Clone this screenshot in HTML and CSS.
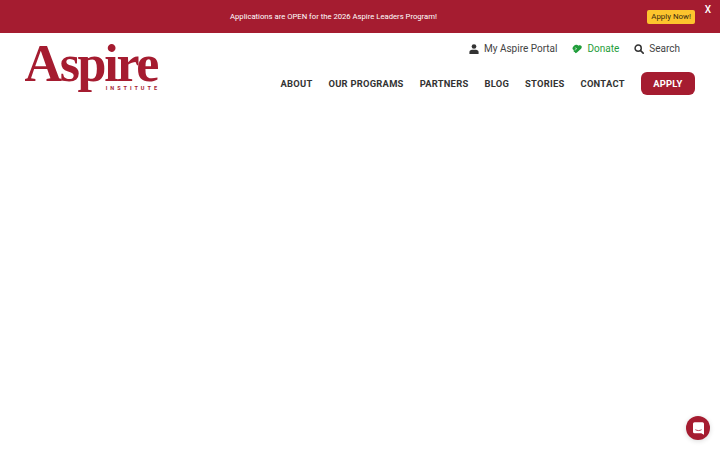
FILE: index.html
```html
<!DOCTYPE html>
<html lang="en">
<head>
    <meta charset="UTF-8">
    <meta name="viewport" content="width=device-width, initial-scale=1.0">
    <title>Aspire Institute</title>
    <link rel="stylesheet" href="styles.css">
</head>
<body>
    <div class="top-banner">
        <p class="banner-text">Applications are OPEN for the 2026 Aspire Leaders Program!</p>
        <a class="banner-button" href="#">Apply Now!</a>
        <span class="banner-close">X</span>
    </div>

    <header class="site-header">
        <a class="logo" href="#">
            <span class="logo-name">Aspire</span>
            <span class="logo-sub">INSTITUTE</span>
        </a>
        <div class="header-right">
            <div class="utility-nav">
                <a class="utility-link" href="#">
                    <svg class="utility-icon" viewBox="0 0 12 12"><circle cx="6" cy="3" r="2.8" fill="#333"/><path d="M.5 12V9.600C.5 7.900 2 6.800 3.600 6.800h4.800c1.600 0 3.100 1.100 3.100 2.800V12z" fill="#333"/></svg>
                    My Aspire Portal
                </a>
                <a class="utility-link donate" href="#">
                    <svg class="utility-icon" viewBox="0 0 12 12"><path d="M4 1.200C5.500.6 7 1.200 7.700 2 8.800 1.300 10.800 1.400 11.500 2.600c.6 1.200-.2 2.800-1.300 3.800L6.300 10c-.7.700-1.500 1.200-2.200.9-.5-.3-.4-1-.9-1.200-.6-.1-1.200-.3-1.300-.9-.1-.6.4-1 .1-1.500C1.600 6.800.6 6.300.6 5.400c0-1.700 1.700-3.500 3.400-4.200z" fill="#1f9d3a"/><path d="M3.500 4.500l2.500 1.200M3.200 7.200l2-.6" stroke="#fff" stroke-width=".7" fill="none"/></svg>
                    Donate
                </a>
                <a class="utility-link" href="#">
                    <svg class="utility-icon" viewBox="0 0 12 12"><circle cx="5" cy="5" r="3.700" fill="none" stroke="#333" stroke-width="1.800"/><path d="M7.800 7.800L11 11" stroke="#333" stroke-width="2" stroke-linecap="round"/></svg>
                    Search
                </a>
            </div>
            <nav class="main-nav">
                <a href="#">ABOUT</a>
                <a href="#">OUR PROGRAMS</a>
                <a href="#">PARTNERS</a>
                <a href="#">BLOG</a>
                <a href="#">STORIES</a>
                <a href="#">CONTACT</a>
                <a class="apply-button" href="#">APPLY</a>
            </nav>
        </div>
    </header>

    <button class="chat-button" aria-label="Open chat">
        <svg viewBox="0 0 14 16" class="chat-icon"><path d="M2 0h10a2 2 0 0 1 2 2v14l-3.500-2H2a2 2 0 0 1-2-2V2a2 2 0 0 1 2-2z" fill="#fff"/><path d="M3 9.500c2.500 1.500 5.500 1.500 8 0" fill="none" stroke="#a51c30" stroke-width="1"/></svg>
    </button>
</body>
</html>
```

FILE: styles.css
```css
:root {
    --brand-color: #a51c30;
    --text-color: #333;
}
html, body {
    height: 100%;
}
body {
    font-family: Roboto, 'Open Sans', sans-serif;
    margin: 0;
    background-color: white;
    color: var(--text-color);
    overflow: hidden;
}
a {
    color: inherit;
    text-decoration: none;
}
.top-banner {
    position: relative;
    display: flex;
    align-items: center;
    justify-content: center;
    height: 33px;
    padding-right: 53px;
    background-color: var(--brand-color);
    color: white;
}
.banner-text {
    margin: 0;
    font-size: 7.700px;
}
.banner-button {
    position: absolute;
    top: 10px;
    right: 25px;
    padding: 0 4px;
    height: 14px;
    line-height: 14px;
    background-color: #fdc42d;
    border-radius: 2px;
    color: #3a2a10;
    font-size: 7.900px;
}
.banner-close {
    position: absolute;
    top: 4px;
    right: 9px;
    font-size: 10px;
    font-weight: 500;
}
.site-header {
    display: flex;
    justify-content: space-between;
    padding: 0 25px;
}
.logo {
    display: flex;
    flex-direction: column;
    align-items: flex-end;
    width: 133px;
    margin-top: 4px;
    margin-left: -1px;
    color: var(--brand-color);
}
.logo-name {
    font-family: 'Liberation Serif', serif;
    font-size: 52px;
    font-weight: 700;
    line-height: 54px;
    letter-spacing: -2.300px;
    white-space: nowrap;
}
.logo-sub {
    margin-top: -6px;
    margin-right: -3px;
    font-size: 5.500px;
    font-weight: 700;
    letter-spacing: 3px;
}
.header-right {
    display: flex;
    flex-direction: column;
    align-items: flex-end;
}
.utility-nav {
    display: flex;
    gap: 15px;
    margin-top: 8px;
    padding-right: 15px;
}
.utility-link {
    display: flex;
    align-items: center;
    gap: 5px;
    height: 15px;
    font-size: 10px;
    color: #444;
}
.utility-icon {
    width: 10px;
    height: 10px;
}
.donate {
    color: #1f9d3a;
}
.main-nav {
    display: flex;
    align-items: center;
    gap: 16px;
    margin-top: 16px;
    font-size: 9.400px;
    font-weight: 700;
    letter-spacing: .25px;
}
.apply-button {
    padding: 0 12.500px;
    height: 23px;
    line-height: 24px;
    background-color: var(--brand-color);
    border-radius: 6px;
    color: white;
}
.chat-button {
    position: fixed;
    right: 10px;
    bottom: 10px;
    display: flex;
    align-items: center;
    justify-content: center;
    width: 24px;
    height: 24px;
    padding: 0;
    border: none;
    border-radius: 50%;
    background-color: var(--brand-color);
    box-shadow: 0 1px 5px rgba(0,0,0,0.15);
}
.chat-icon {
    width: 11px;
    height: 13px;
}
```
